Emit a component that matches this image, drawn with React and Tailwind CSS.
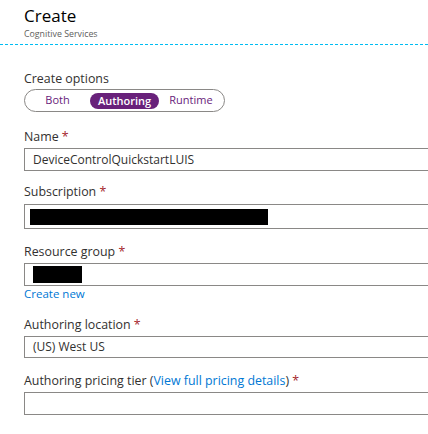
import React from 'react';

const Req = () => <span className="text-[#a4262c]"> *</span>;

const Label = ({ children, className = '' }) => (
  <p className={`text-[12.4px] leading-[16px] text-[#323130] ${className}`}>{children}</p>
);

const Box = ({ children, className = '' }) => (
  <div className={`w-[420px] border border-[#8a8886] bg-white flex items-center ${className}`}>{children}</div>
);

export default function App() {
  return (
    <div className="w-[428px] h-[434px] overflow-hidden bg-white font-['Open_Sans',sans-serif]">
      {/* Header */}
      <div className="pl-6 pt-[5px]">
        <h1 className="text-[17px] leading-[22px] text-[#000]">Create</h1>
        <p className="mt-[2px] text-[8.8px] leading-[10px] text-[#605e5c]">Cognitive Services</p>
      </div>
      <div className="mt-[5px] border-t border-dashed border-[#00bcf2]" />

      <div className="pl-6">
        {/* Create options */}
        <Label className="mt-[26px] mb-[2px]">Create options</Label>
        <div className="w-[201px] h-[23px] rounded-full border border-[#8a8886] flex items-center text-[11px]">
          <span className="w-[65px] text-center text-[#68217a]">Both</span>
          <span className="w-[69px] h-[16px] leading-[16px] rounded-full bg-[#68217a] text-white text-center font-semibold">
            Authoring
          </span>
          <span className="w-[64px] text-center text-[#68217a]">Runtime</span>
        </div>

        {/* Name */}
        <Label className="mt-[17px] mb-[3px]">
          Name<Req />
        </Label>
        <Box className="h-[23px] pl-2 text-[12px] text-[#323130]">DeviceControlQuickstartLUIS</Box>

        {/* Subscription */}
        <Label className="mt-[13px] mb-[4px]">
          Subscription<Req />
        </Label>
        <Box className="h-[25px] pl-[5px]">
          <div className="w-[238px] h-[16px] bg-black" />
        </Box>

        {/* Resource group */}
        <Label className="mt-[15px] mb-[3px]">
          Resource group<Req />
        </Label>
        <Box className="h-[23px] pl-2">
          <div className="w-[49px] h-[17px] bg-black" />
        </Box>
        <a className="block text-[11.5px] leading-[16px] text-[#0078d4]">Create new</a>

        {/* Authoring location */}
        <Label className="mt-[15px] mb-[3px]">
          Authoring location<Req />
        </Label>
        <Box className="h-[22px] pl-2 text-[12px] text-[#323130]">(US) West US</Box>

        {/* Pricing tier */}
        <Label className="mt-[15px] mb-[3px]">
          Authoring pricing tier (<span className="text-[#0078d4]">View full pricing details</span>)<Req />
        </Label>
        <Box className="h-[23px]" />
      </div>
    </div>
  );
}
